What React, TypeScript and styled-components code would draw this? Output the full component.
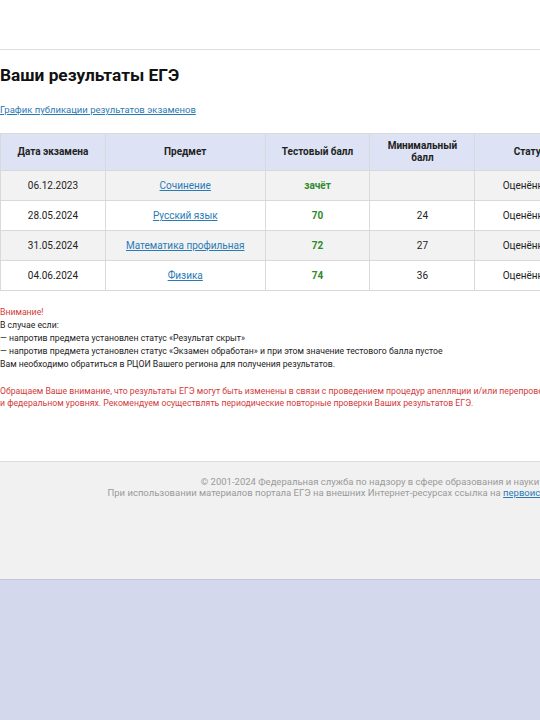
import styled, { createGlobalStyle } from 'styled-components'

const Global = createGlobalStyle`
  html, body {
    margin: 0;
    padding: 0;
    overflow-x: hidden;
    background: #d3d8ed;
    font-family: Roboto, "Noto Sans", Arial, sans-serif;
  }
`

const Page = styled.div`
  width: 740px;
  background: #fff;
  box-shadow: 0 6px 14px rgba(40, 40, 80, 0.6);
`

const TopBar = styled.div`
  height: 49px;
  border-bottom: 1px solid #dedede;
`

const Main = styled.main`
  padding: 14px 0 52px;
`

const Title = styled.h1`
  margin: 0;
  font-size: 17.3px;
  line-height: 22px;
  font-weight: 700;
  color: #111;
`

const Link = styled.a`
  color: #2a7bb5;
  text-decoration: underline;
  cursor: pointer;
`

const ScheduleLine = styled.p`
  margin: 18px 0 0;
  font-size: 9.5px;
  line-height: 12px;
`

const Table = styled.table`
  margin-top: 17px;
  border-collapse: collapse;
  font-size: 10px;
  color: #222;

  th, td {
    border: 1px solid #d9d9d9;
    text-align: center;
    padding: 0 6px;
  }

  th {
    background: #dde3f5;
    font-weight: 700;
    height: 36px;
    line-height: 12px;
  }

  td {
    height: 29px;
  }

  tbody tr:nth-child(odd) td {
    background: #f2f2f2;
  }
`

const Score = styled.span`
  color: #2e8a2a;
  font-weight: 700;
`

const Notes = styled.div`
  margin-top: 15px;
  font-size: 8.7px;
  line-height: 13px;
  color: #222;
`

const Warn = styled.div<{ $gap?: boolean }>`
  color: #d23b3b;
  margin-top: ${p => (p.$gap ? '14px' : '0')};
  line-height: ${p => (p.$gap ? '12px' : '13px')};
`

const Footer = styled.footer`
  border-top: 1px solid #dcdcdc;
  border-bottom: 1px solid #c3c6d4;
  background: #f1f1f1;
  height: 103px;
  padding-top: 14px;
  text-align: center;
  font-size: 9.5px;
  line-height: 11px;
  color: #9a9a9a;
`

const rows = [
  { date: '06.12.2023', subject: 'Сочинение', score: 'зачёт', min: '' },
  { date: '28.05.2024', subject: 'Русский язык', score: '70', min: '24' },
  { date: '31.05.2024', subject: 'Математика профильная', score: '72', min: '27' },
  { date: '04.06.2024', subject: 'Физика', score: '74', min: '36' },
]

export default function App() {
  return (
    <>
      <Global />
      <Page>
        <TopBar />
        <Main>
          <Title>Ваши результаты ЕГЭ</Title>
          <ScheduleLine>
            <Link>График публикации результатов экзаменов</Link>
          </ScheduleLine>
          <Table>
            <colgroup>
              <col style={{ width: 105 }} />
              <col style={{ width: 160 }} />
              <col style={{ width: 105 }} />
              <col style={{ width: 105 }} />
              <col style={{ width: 110 }} />
              <col style={{ width: 155 }} />
            </colgroup>
            <thead>
              <tr>
                <th>Дата экзамена</th>
                <th>Предмет</th>
                <th>Тестовый балл</th>
                <th>Минимальный<br />балл</th>
                <th>Статус</th>
                <th>Апелляция</th>
              </tr>
            </thead>
            <tbody>
              {rows.map(r => (
                <tr key={r.date}>
                  <td>{r.date}</td>
                  <td><Link>{r.subject}</Link></td>
                  <td><Score>{r.score}</Score></td>
                  <td>{r.min}</td>
                  <td>Оценённый</td>
                  <td></td>
                </tr>
              ))}
            </tbody>
          </Table>
          <Notes>
            <Warn>Внимание!</Warn>
            <div>В случае если:</div>
            <div>— напротив предмета установлен статус «Результат скрыт»</div>
            <div>— напротив предмета установлен статус «Экзамен обработан» и при этом значение тестового балла пустое</div>
            <div>Вам необходимо обратиться в РЦОИ Вашего региона для получения результатов.</div>
            <Warn $gap>
              Обращаем Ваше внимание, что результаты ЕГЭ могут быть изменены в связи с проведением процедур апелляции и/или перепроверки на региональном
              <br />
              и федеральном уровнях. Рекомендуем осуществлять периодические повторные проверки Ваших результатов ЕГЭ.
            </Warn>
          </Notes>
        </Main>
        <Footer>
          <div>© 2001-2024 Федеральная служба по надзору в сфере образования и науки</div>
          <div>
            При использовании материалов портала ЕГЭ на внешних Интернет-ресурсах ссылка на <Link>первоисточник</Link> обязательна.
          </div>
        </Footer>
      </Page>
    </>
  )
}
